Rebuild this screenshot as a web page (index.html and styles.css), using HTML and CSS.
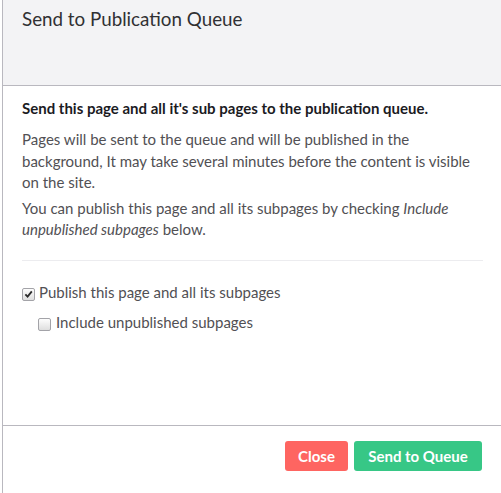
FILE: index.html
```html
<!DOCTYPE html>
<html>
<head>
<meta charset="utf-8">
<link rel="stylesheet" href="styles.css">
</head>
<body>
<div class="dialog">
  <div class="header">
    <h1 class="title">Send to Publication Queue</h1>
  </div>
  <div class="content">
    <p class="lead">Send this page and all it's sub pages to the publication queue.</p>
    <p class="text">Pages will be sent to the queue and will be published in the background, It may take several minutes before the content is visible on the site.</p>
    <p class="text">You can publish this page and all its subpages by checking <em>Include</em> <em>unpublished subpages</em> below.</p>
    <div class="divider"></div>
    <label class="check"><span class="box checked"><svg viewBox="0 0 12 12" width="12" height="12"><path d="M2.6 6.4 L5 8.8 L9.6 3.2" fill="none" stroke="#2b2b2b" stroke-width="2"/></svg></span><span>Publish this page and all its subpages</span></label>
    <label class="check sub"><span class="box"></span><span>Include unpublished subpages</span></label>
  </div>
  <div class="footer">
    <button class="btn btn-close">Close</button>
    <button class="btn btn-send">Send to Queue</button>
  </div>
</div>
</body>
</html>
```
FILE: styles.css
```css
html, body {
  margin: 0;
  padding: 0;
  background: #fff;
}
body {
  font-family: Lato, "Open Sans", sans-serif;
  font-size: 15px;
  color: #515054;
}
.dialog {
  margin-left: 2px;
  border-left: 1px solid #b9b8bf;
  height: 493px;
  display: flex;
  flex-direction: column;
  box-sizing: border-box;
}
.header {
  background: #f3f3f5;
  border-bottom: 1px solid #b9b8bf;
  padding: 7px 19px;
  box-sizing: border-box;
  height: 86px;
}
.title {
  margin: 0;
  font-size: 18.8px;
  font-weight: 400;
  line-height: 23px;
  color: #303033;
}
.content {
  flex: 1;
  padding: 12px 18px 0 19px;
  border-bottom: 1px solid #b9b8bf;
}
.lead {
  margin: 0 0 10px;
  font-weight: 700;
  color: #1b1b1f;
  line-height: 21px;
}
.text {
  margin: 0 0 4px;
  line-height: 21.5px;
}
.divider {
  border-top: 1px solid #ececef;
  margin: 19px 0 21px;
}
.check {
  display: flex;
  align-items: center;
  gap: 4px;
  line-height: 21px;
  margin-bottom: 9px;
}
.box {
  width: 11px;
  height: 11px;
  border: 1px solid #a3a3a8;
  border-radius: 2px;
  background: linear-gradient(#fdfdfd, #dedede);
  display: flex;
  align-items: center;
  justify-content: center;
  margin-top: 4px;
}
.box svg {
  display: block;
}
.check.sub {
  padding-left: 16px;
}
.check.sub .box {
  margin-right: 1px;
}
.footer {
  height: 67px;
  display: flex;
  justify-content: flex-end;
  align-items: flex-start;
  gap: 6px;
  padding: 15px 19px 0 0;
  box-sizing: border-box;
}
.btn {
  border: none;
  border-radius: 3px;
  height: 30px;
  font-family: Lato, sans-serif;
  font-size: 15px;
  font-weight: 700;
  color: #fff;
  padding: 0;
}
.btn-close {
  background: #fe6561;
  width: 63px;
}
.btn-send {
  background: #37c786;
  width: 128px;
}
```
